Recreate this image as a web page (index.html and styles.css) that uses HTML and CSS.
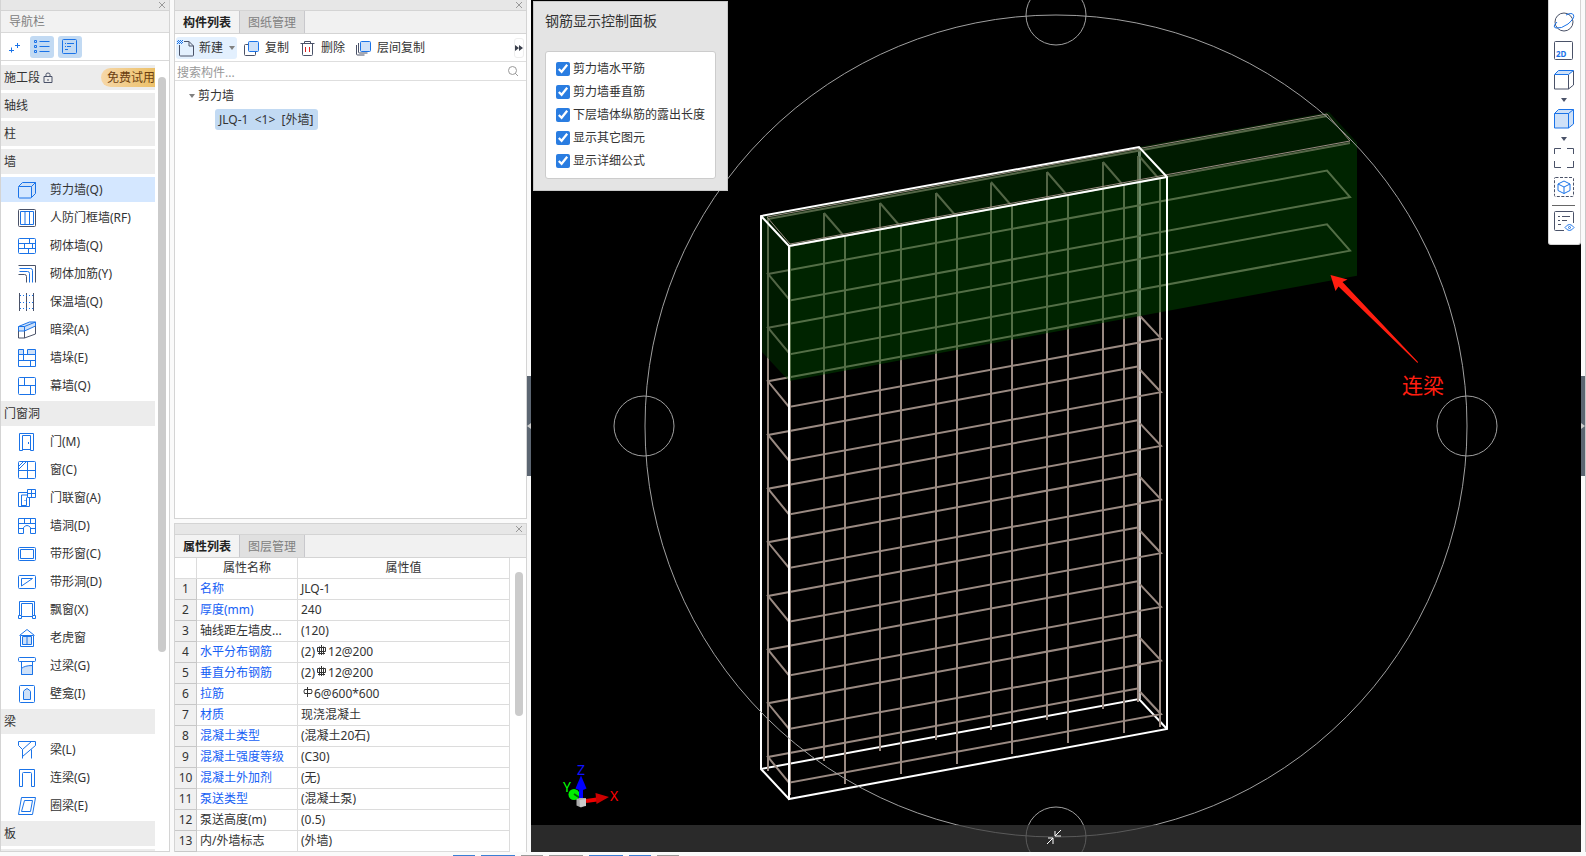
FILE: index.html
```html
<!DOCTYPE html>
<html lang="zh-CN">
<head>
    <meta charset="UTF-8">
    <meta name="viewport" content="width=device-width, initial-scale=1.0">
    <title>剪力墙</title>
    <link rel="stylesheet" href="styles.css">
</head>
<body>
    <main class="workspace">
        <!-- navigation -->
        <nav class="panel nav">
            <div class="grip"><button class="close" aria-label="关闭"><svg viewBox="0 0 8 8"><path d="M1 1l6 6M7 1l-6 6"/></svg></button></div>
            <h2 class="nav-title">导航栏</h2>
            <div class="nav-tools">
                <button class="tool" aria-label="展开"><svg class="icon" viewBox="0 0 18 18"><path class="b" d="M6.500 9.500v5M4 12.500h5M12.500 5v5M10 7.500h5"/></svg></button>
                <button class="tool on" aria-label="列表"><svg class="icon" viewBox="0 0 18 18"><path class="b" d="M6.500 3.500h10M6.500 8.500h10M6.500 13.500h10M1.500 2.500h2v2h-2zM1.500 7.500h2v2h-2zM1.500 12.500h2v2h-2z"/></svg></button>
                <button class="tool on" aria-label="详情"><svg class="icon" viewBox="0 0 18 18"><rect class="b" x="1.500" y="1.500" width="14" height="14" rx="1"/><path class="b" d="M4 5.500h1M6 5.500h7M4 8.500h1M6 8.500h4M4 11.500h3"/></svg></button>
            </div>
            <div class="nav-body">
                <ul class="nav-list">
                    <li><button class="group">施工段<svg class="lock" viewBox="0 0 10 12"><path d="M1 4.500h8v6H1zM3 4.500v-2q0-1.500 2-1.500t2 1.500v2M5 7v2"/></svg><span class="trial">免费试用</span></button></li>
                    <li><button class="group">轴线</button></li>
                    <li><button class="group">柱</button></li>
                    <li><button class="group">墙</button></li>
                    <li><button class="item active"><svg class="icon" viewBox="0 0 18 18"><path class="b f" d="M.5 5.500l4-4h13v11l-4 4V5.500z"/><rect class="b" x=".5" y="5.500" width="13" height="11.500" rx="1" fill="#d4e7ff"/><path class="b" d="M13.500 5.500l4-4"/></svg>剪力墙(Q)</button></li>
                    <li><button class="item"><svg class="icon" viewBox="0 0 18 18"><rect class="d" x=".5" y=".5" width="17" height="17" rx="1"/><path class="b" d="M2.500 2.500h13v13h-13zM7 2.500v13M11.500 2.500v13"/></svg>人防门框墙(RF)</button></li>
                    <li><button class="item"><svg class="icon" viewBox="0 0 18 18"><rect class="b" x=".5" y="1.500" width="17" height="15" rx="1"/><path class="b" d="M.5 6.500h17M.5 11.500h17M11.500 1.500v5M6.500 6.500v5M14.500 6.500v5M10.500 11.500v5"/></svg>砌体墙(Q)</button></li>
                    <li><button class="item"><svg class="icon" viewBox="0 0 18 18"><path class="d" d="M.5.500h17v17M.5 9.500h6q2 0 2 2v6"/><path class="b" d="M1.500 3.500h11q2 0 2 2v12M1.500 6.500h8q2 0 2 2v9"/></svg>砌体加筋(Y)</button></li>
                    <li><button class="item"><svg class="icon" viewBox="0 0 18 18"><path class="d" d="M1.500 0v18M8.500 0v18M15.500 0v18"/><path class="b" stroke-dasharray="1 2" d="M2 2.500h14M2 9.500h14M2 15.500h14"/></svg>保温墙(Q)</button></li>
                    <li><button class="item"><svg class="icon" viewBox="0 0 18 18"><path class="d" d="M.5 10v7h6v-7M6.500 17l11-4V5"/><path class="b f" d="M.5 5.500l11-4.500h6v4l-11 5h-6zM.5 5.500h6v4.500M6.500 5.500L17.500 1"/></svg>暗梁(A)</button></li>
                    <li><button class="item"><svg class="icon" viewBox="0 0 18 18"><path class="b f" d="M.5.500h5v5h-5zM9.500.500h8v5h-8z"/><path class="b" d="M.5 5.500v12h17v-12M.5 5.500h17M5.500.500v5M.5 11.500h17M5.500 5.500v6M12.500 11.500v6"/></svg>墙垛(E)</button></li>
                    <li><button class="item"><svg class="icon" viewBox="0 0 18 18"><rect class="b" x=".5" y=".5" width="17" height="17" rx="1"/><path class="b" d="M.5 8.500h17M6.500.500v8M12.500 8.500v9"/></svg>幕墙(Q)</button></li>
                    <li><button class="group">门窗洞</button></li>
                    <li><button class="item"><svg class="icon" viewBox="0 0 18 18"><path class="b" d="M1.500 17.500V.500h14v17h-3v-15h-8v15z"/><path class="b" d="M4.500 16.500h8M10.500 9v2"/></svg>门(M)</button></li>
                    <li><button class="item"><svg class="icon" viewBox="0 0 18 18"><rect class="b" x=".5" y=".5" width="17" height="17" rx="1"/><path class="b" d="M.5 9.500h17M9.500.500v17M1 5l4-4M1 8l7-7"/></svg>窗(C)</button></li>
                    <li><button class="item"><svg class="icon" viewBox="0 0 18 18"><path class="b" d="M9.500.500h8v8h-8zM9.500 4.500h8M13.500.500v8M9.500 3.500h-9v14h11v-9M3.500 17v-11h6M3.500 16.500h5v-8M7 11v1"/></svg>门联窗(A)</button></li>
                    <li><button class="item"><svg class="icon" viewBox="0 0 18 18"><path class="b" d="M.5 1.500h17v15h-5v-6q-3.500-4-7 0v6h-5zM.5 6.500h17M6.500 1.500v5M12.500 1.500v5M.5 11.500h5M12.500 11.500h5"/></svg>墙洞(D)</button></li>
                    <li><button class="item"><svg class="icon" viewBox="0 0 18 18"><rect class="b" x=".5" y="2.500" width="17" height="13" rx="1"/><path class="b" d="M2.500 4.500h13v9h-13z"/></svg>带形窗(C)</button></li>
                    <li><button class="item"><svg class="icon" viewBox="0 0 18 18"><rect class="b" x=".5" y="2.500" width="17" height="13" rx="1"/><path class="b" d="M3.500 13V5.500h11z"/></svg>带形洞(D)</button></li>
                    <li><button class="item"><svg class="icon" viewBox="0 0 18 18"><path class="b" d="M1.500 14.500V.500h15v14M3.500 14.500v-12h11v12M.5 14.500h3v3h-3zM14.500 14.500h3v3h-3zM3.500 15.500h11"/></svg>飘窗(X)</button></li>
                    <li><button class="item"><svg class="icon" viewBox="0 0 18 18"><path class="b" d="M1.500 6.500L9 .5l7.500 6M2.500 6.500v11h13v-11z"/><path class="b f" d="M4.500 7.500h9v8h-9zM9 7.500v8"/></svg>老虎窗</button></li>
                    <li><button class="item"><svg class="icon" viewBox="0 0 18 18"><rect class="b" x=".5" y=".5" width="17" height="4" rx="1"/><path class="b" d="M3.500 4.500v13h11v-13"/><path class="b f" d="M3.500 17.500v-6q3-3 11-3v9z"/></svg>过梁(G)</button></li>
                    <li><button class="item"><svg class="icon" viewBox="0 0 18 18"><rect class="b" x="1.500" y=".5" width="15" height="17" rx="1"/><path class="b f" d="M5.500 14.500v-8q0-1 3.500-3 3.500 2 3.500 3v8z"/></svg>壁龛(I)</button></li>
                    <li><button class="group">梁</button></li>
                    <li><button class="item"><svg class="icon" viewBox="0 0 18 18"><path class="b" d="M.5 4.500v-4h17v4L4.500 15.500M.5 4.500l4 4v9M4.500 8.500l9-8M13.500 8.500v9"/></svg>梁(L)</button></li>
                    <li><button class="item"><svg class="icon" viewBox="0 0 18 18"><path class="b" d="M1.500 17.500V.500h15v17h-3v-13q0-1-1-1h-7q-1 0-1 1v13z"/></svg>连梁(G)</button></li>
                    <li><button class="item"><svg class="icon" viewBox="0 0 18 18"><path class="b" d="M3.500.500h14l-3 17H.500zM6.500 3.500h8l-2 11h-9z"/></svg>圈梁(E)</button></li>
                    <li><button class="group">板</button></li>
                    <li><button class="group" aria-label="更多"></button></li>
                </ul>
                <div class="track nav-track"><i></i></div>
            </div>
        </nav>

        <div class="middle">
            <!-- component list -->
            <section class="panel components">
                <div class="grip"><button class="close" aria-label="关闭"><svg viewBox="0 0 8 8"><path d="M1 1l6 6M7 1l-6 6"/></svg></button></div>
                <div class="tabs"><button class="tab on">构件列表</button><button class="tab">图纸管理</button></div>
                <div class="actions">
                    <button class="action new"><svg class="icon" viewBox="0 0 18 18"><path class="d" d="M2.500 6v10q0 1 1 1h12q1 0 1-1V7l-4.500-4.500H7M12 2.500V7h4.500"/><path class="check" d="M1 1.500h5M0 2.500h5M1 3.500h5M0 4.500h5"/></svg>新建<span class="caret"></span></button>
                    <button class="action"><svg class="icon" viewBox="0 0 18 18"><path class="d" d="M5 5.500H2.500q-1 0-1 1v9q0 1 1 1h9q1 0 1-1V13"/><rect class="b f" x="5.500" y="2.500" width="10" height="10" rx="1"/></svg>复制</button>
                    <button class="action"><svg class="icon" viewBox="0 0 18 18"><path class="d" d="M3.500 5v10.500q0 1 1 1h8q1 0 1-1V5M1.500 4.500h14M5.500 4V2.500h6V4"/><path class="r" d="M6.500 8v5M10.500 8v5"/></svg>删除</button>
                    <button class="action"><svg class="icon" viewBox="0 0 18 18"><path class="d" d="M1.500 6v9q0 1 1 1h7M3.500 4v9q0 1 1 1h8"/><rect class="b f" x="5.500" y="2.500" width="10" height="10" rx="1"/></svg>层间复制</button>
                    <button class="more" aria-label="更多"><svg viewBox="0 0 8 6"><path d="M0 0l4 3-4 3zM4 0l4 3-4 3z"/></svg></button>
                </div>
                <label class="search"><input type="text" placeholder="搜索构件..." aria-label="搜索构件"><svg viewBox="0 0 12 12"><circle cx="5.500" cy="5.500" r="4"/><path d="M8 8l3 3"/></svg></label>
                <div class="tree">
                    <button class="branch"><span class="caret"></span>剪力墙</button>
                    <button class="leaf">JLQ-1&nbsp; &lt;1&gt;&nbsp; [外墙]</button>
                </div>
            </section>

            <!-- property list -->
            <section class="panel props">
                <div class="grip"><button class="close" aria-label="关闭"><svg viewBox="0 0 8 8"><path d="M1 1l6 6M7 1l-6 6"/></svg></button></div>
                <div class="tabs"><button class="tab on">属性列表</button><button class="tab">图层管理</button></div>
                <div class="props-body">
                    <table>
                        <thead><tr><th class="no"></th><th class="name">属性名称</th><th>属性值</th></tr></thead>
                        <tbody>
                            <tr><td>1</td><td class="link">名称</td><td>JLQ-1</td></tr>
                            <tr><td>2</td><td class="link">厚度(mm)</td><td>240</td></tr>
                            <tr><td>3</td><td>轴线距左墙皮...</td><td>(120)</td></tr>
                            <tr><td>4</td><td class="link">水平分布钢筋</td><td>(2)<svg class="bar" viewBox="0 0 11 11"><path d="M1.500 2.500h8v4h-8zM5.500 0v10M3.500 1.500v8M7.500 1.500v8M2 8.500h7"/></svg>12@200</td></tr>
                            <tr><td>5</td><td class="link">垂直分布钢筋</td><td>(2)<svg class="bar" viewBox="0 0 11 11"><path d="M1.500 2.500h8v4h-8zM5.500 0v10M3.500 1.500v8M7.500 1.500v8M2 8.500h7"/></svg>12@200</td></tr>
                            <tr><td>6</td><td class="link">拉筋</td><td><svg class="bar" viewBox="0 0 11 11"><path d="M2.500 2.500h7q1 2 0 4h-7q-1-2 0-4zM5.500 0v10"/></svg>6@600*600</td></tr>
                            <tr><td>7</td><td class="link">材质</td><td>现浇混凝土</td></tr>
                            <tr><td>8</td><td class="link">混凝土类型</td><td>(混凝土20石)</td></tr>
                            <tr><td>9</td><td class="link">混凝土强度等级</td><td>(C30)</td></tr>
                            <tr><td>10</td><td class="link">混凝土外加剂</td><td>(无)</td></tr>
                            <tr><td>11</td><td class="link">泵送类型</td><td>(混凝土泵)</td></tr>
                            <tr><td>12</td><td>泵送高度(m)</td><td>(0.5)</td></tr>
                            <tr><td>13</td><td>内/外墙标志</td><td>(外墙)</td></tr>
                        </tbody>
                    </table>
                    <div class="track props-track"><i></i></div>
                </div>
            </section>
        </div>

        <div class="splitter"><button class="handle" aria-label="折叠"><svg viewBox="0 0 4 6"><path d="M4 0L0 3l4 3z"/></svg></button></div>

        <!-- 3D view -->
        <section class="view">
            <svg class="scene" viewBox="531 0 1050 852" preserveAspectRatio="xMidYMin slice">
                <defs>
                    <path id="hoop" d="M1139 312.600L768 381.300L789 407L1161 338.500L1140 316"/>
                    <path id="long-hoop" d="M768 274L1327 170.600L1350 197L790 300.500z"/>
                    <path id="tie" d="M824 213l19 22"/>
                </defs>
                <!-- bottom and rear edges of the wall -->
                <path class="edge" d="M761 769L1139 699L1167 729"/>
                <path class="rear" d="M1139.500 148V699"/>
                <!-- vertical bars -->
                <g class="rebar upright">
                    <path d="M768 218V771M824 213V761M880 203V751M936 193V740M991 183V730M1047 172V720M1103 162V709M1138 156V702"/>
                    <path d="M790 246V795M845 236V784M901 226V774M957 216V764M1012 205V754M1068 195V743M1124 184V733M1160 178V727"/>
                </g>
                <g class="rebar">
                    <use href="#hoop"/>
                    <use href="#hoop" y="53.700"/>
                    <use href="#hoop" y="107.400"/>
                    <use href="#hoop" y="161"/>
                    <use href="#hoop" y="214.700"/>
                    <use href="#hoop" y="268.400"/>
                    <use href="#hoop" y="322"/>
                    <use href="#hoop" y="375.700"/>
                    <use href="#long-hoop"/>
                    <use href="#long-hoop" y="53.700"/>
                    <path d="M768 219L1327 116M1350 143L790 246"/>
                    <use href="#tie"/>
                    <use href="#tie" x="56" y="-10"/>
                    <use href="#tie" x="112" y="-20"/>
                    <use href="#tie" x="167" y="-31"/>
                    <use href="#tie" x="223" y="-41"/>
                    <use href="#tie" x="279" y="-51"/>
                    <use href="#tie" x="316" y="-56"/>
                </g>
                <!-- coupling beam -->
                <path class="beam-dark" d="M761 216L1329 112L1357 142.500L789 247V381L761 351z"/>
                <path class="beam" d="M789 247L1357 142.500V275.700L789 381z"/>
                <path class="rebar thin" d="M767 217L1327 114L1350 141L790 244z"/>
                <path class="edge" d="M789 799L761 769V216L1139 147L1167 177V729L789 799V246L761 216M789 246L1167 177"/>
                <!-- orbit rings -->
                <g class="orbit">
                    <circle cx="1056" cy="426" r="411"/>
                    <circle cx="1056" cy="15" r="30"/>
                    <circle cx="1056" cy="837" r="30"/>
                    <circle cx="644" cy="426" r="30"/>
                    <circle cx="1467" cy="426" r="30"/>
                </g>
                <path class="pointer" d="M1330.500 275l17 4.500-5 2.500 75.500 80-.5 1-79-76.500-3 4.500z"/>
                <text class="note" x="1402" y="393">连梁</text>
                <!-- axes -->
                <circle cx="574" cy="794.500" r="5.500" fill="#0e0"/>
                <path d="M574 794l6 4" stroke="#060" stroke-width="2"/>
                <path d="M586 801l11-1.500" stroke="#e00" stroke-width="4"/>
                <path d="M595.500 793l13.500 4-12.500 7z" fill="#c00"/>
                <path d="M581 800v-13" stroke="#00f" stroke-width="4"/>
                <path d="M581 775.500l5.500 13q-5.500 3-11 0z" fill="#00f"/>
                <path d="M576.500 799l3-1h6.500v7l-5 2.500-4.500-2z" fill="#aaa"/>
                <path d="M579.500 800l6.500-1v7l-6 1z" fill="#ccc"/>
                <text class="axis" x="577" y="775" fill="#11f">Z</text>
                <text class="axis" x="563" y="792" fill="#0f0">Y</text>
                <text class="axis" x="610" y="801" fill="#f00">X</text>
            </svg>

            <form class="display">
                <h3>钢筋显示控制面板</h3>
                <div class="options">
                    <label><input type="checkbox" checked>剪力墙水平筋</label>
                    <label><input type="checkbox" checked>剪力墙垂直筋</label>
                    <label><input type="checkbox" checked>下层墙体纵筋的露出长度</label>
                    <label><input type="checkbox" checked>显示其它图元</label>
                    <label><input type="checkbox" checked>显示详细公式</label>
                </div>
            </form>

            <div class="view-tools">
                <button aria-label="动态观察"><svg viewBox="0 0 22 22"><circle class="d" cx="11" cy="11" r="9"/><path class="b" d="M4 11Q-1 16 3 17 8 18 15 13 22 7 20.500 4 19 1 13 4"/></svg></button>
                <button aria-label="二维"><svg viewBox="0 0 22 22"><rect class="d" x="1.500" y="1.500" width="18" height="18" rx="1"/><text x="3" y="17">2D</text></svg></button>
                <button aria-label="视图方向"><svg viewBox="0 0 22 22"><path class="d" d="M1.500 6v14h14V6M15.500 20l5-4V2"/><path class="b f" d="M1.500 5.500l4-4h15l-5 4z"/></svg></button>
                <span class="caret"></span>
                <button aria-label="显示样式"><svg viewBox="0 0 22 22"><path class="b f" d="M1.500 5.500l4-4h15v14.500l-5 4h-14zM1.500 5.500h14v14.500M15.500 5.500l5-4"/></svg></button>
                <span class="caret"></span>
                <button aria-label="全屏"><svg viewBox="0 0 22 22"><path class="d" d="M1.500 7V1.500H8M14 1.500h6.500V7M20.500 14v6.500H14M8 20.500H1.500V14"/></svg></button>
                <button aria-label="局部三维"><svg viewBox="0 0 22 22"><rect class="d" x="1.500" y="1.500" width="19" height="19" rx="1" stroke-dasharray="3 1.500"/><path class="b" d="M11 5l6 3v6.500l-6 3-6-3V8zM5 8l6 3 6-3M11 11v6.500"/></svg></button>
                <hr>
                <button aria-label="显示设置"><svg viewBox="0 0 22 22"><path class="d" d="M11 20.500H2.500q-1 0-1-1v-17q0-1 1-1h17q1 0 1 1V13M5 6.500h2M9 6.500h8M5 10.500h2M9 10.500h5M5 14.500h3"/><path class="b" d="M12 17.500q4.500-6 9 0-4.500 6-9 0z"/><circle class="b" cx="16.500" cy="17.500" r="1"/></svg></button>
            </div>

            <div class="dock"><button aria-label="收起"><svg viewBox="0 0 16 16"><path d="M15 1L9 7M9 2v5h6M1 15l6-6M2 9h5v6"/></svg></button></div>
        </section>

        <div class="splitter right"><button class="handle" aria-label="展开"><svg viewBox="0 0 4 6"><path d="M0 0l4 3-4 3z"/></svg></button></div>
    </main>
    <footer class="status"><i></i><i class="wide"></i><i class="gray"></i><i class="gray wide"></i><i class="wide"></i><i></i><i class="gray"></i></footer>
</body>
</html>
```
FILE: styles.css
```css
* {
    box-sizing: border-box;
}
body {
    margin: 0;
    height: 100vh;
    display: flex;
    flex-direction: column;
    overflow: hidden;
    background: #fafafa;
    color: #333;
    font-family: "Noto Sans", "Noto Sans CJK SC", sans-serif;
    font-size: 12px;
    line-height: 20px;
}
button {
    padding: 0;
    border: 0;
    background: none;
    color: inherit;
    font: inherit;
}
svg {
    display: block;
    flex: none;
    fill: none;
}
.workspace {
    flex: 1;
    min-height: 0;
    display: flex;
}

/* icon strokes */
.icon {
    width: 18px;
    height: 18px;
}
.b {
    stroke: #1a73e8;
}
.d {
    stroke: #4a5268;
}
.r {
    stroke: #e02020;
}
.f {
    fill: #cfe1f8;
}
.check {
    stroke: #1a73e8;
    stroke-dasharray: 1 1;
}
.caret {
    border: 3px solid transparent;
    border-top: 4px solid #808080;
    border-bottom: 0;
}

/* panels */
.panel {
    display: flex;
    flex-direction: column;
    background: #fff;
    border: 1px solid #d4d4d4;
    border-top: 0;
    overflow: hidden;
}
.grip {
    flex: none;
    height: 11px;
    display: flex;
    justify-content: flex-end;
    align-items: center;
    padding-right: 3px;
    background: #e7e7e7;
    border-bottom: 1px solid #d4d4d4;
}
.close svg {
    width: 8px;
    height: 8px;
    stroke: #999;
}
.track {
    position: relative;
    flex: none;
}
.track i {
    display: block;
    width: 8px;
    border-radius: 4px;
    background: #cbcbcb;
}

/* navigation */
.nav {
    width: 170px;
    flex: none;
}
.nav-title {
    flex: none;
    margin: 0;
    height: 22px;
    padding-left: 8px;
    background: #f2f2f2;
    border-bottom: 1px solid #d9d9d9;
    color: #808080;
    font-size: 12px;
    font-weight: normal;
    line-height: 22px;
}
.nav-tools {
    flex: none;
    height: 28px;
    display: flex;
    align-items: center;
    gap: 4px;
    padding-left: 1px;
    border-bottom: 1px solid #d9d9d9;
}
.tool {
    width: 24px;
    height: 22px;
    display: flex;
    align-items: center;
    justify-content: center;
    border-radius: 3px;
}
.tool.on {
    background: #c2daf3;
}
.nav-body {
    flex: 1;
    min-height: 0;
    display: flex;
    gap: 3px;
    padding-top: 4px;
    overflow: hidden;
}
.nav-list {
    flex: 1;
    margin: 0;
    padding: 0;
    list-style: none;
    display: flex;
    flex-direction: column;
    gap: 3px;
}
.nav-list li {
    flex: none;
}
.group, .item {
    width: 100%;
    height: 25px;
    display: flex;
    align-items: center;
    text-align: left;
}
.group {
    padding-left: 3px;
    background: #ececec;
}
.item {
    gap: 14px;
    padding-left: 17px;
}
.item.active {
    background: #d4e7ff;
}
.lock {
    width: 10px;
    height: 12px;
    margin-left: 3px;
    stroke: #4a5268;
}
.trial {
    height: 19px;
    margin-left: auto;
    padding-left: 6px;
    border-radius: 10px 0 0 10px;
    background: linear-gradient(90deg, #f6d7a8, #ecc068);
    color: #6b3e10;
    line-height: 19px;
}
.nav-track {
    width: 11px;
    padding-top: 12px;
}
.nav-track i {
    height: 575px;
}

/* middle column */
.middle {
    width: 353px;
    flex: none;
    margin-left: 4px;
    display: flex;
    flex-direction: column;
    gap: 4px;
}
.components {
    flex: 1;
}
.tabs {
    flex: none;
    height: 23px;
    display: flex;
    background: #f1f1f1;
    border-bottom: 1px solid #d4d4d4;
}
.tab {
    width: 65px;
    padding-top: 2px;
    border-right: 1px solid #c8c8cc;
    background: #e0e0e0;
    color: #808080;
}
.tab.on {
    background: #f3f3f3;
    color: #222;
    font-weight: bold;
}
.actions {
    flex: none;
    height: 28px;
    display: flex;
    align-items: center;
    gap: 10px;
    padding: 0 2px 0 1px;
    border-bottom: 1px solid #dedede;
}
.action {
    height: 22px;
    display: flex;
    align-items: center;
    gap: 4px;
}
.action.new {
    margin-right: -4px;
    padding: 0 2px 0 1px;
    border-radius: 3px;
    background: #e3f0fe;
}
.action.new .caret {
    margin-left: 2px;
}
.more {
    width: 10px;
    height: 20px;
    margin-left: auto;
    display: flex;
    align-items: center;
    justify-content: center;
    border: 1px solid #eee;
    border-radius: 3px;
}
.more svg {
    width: 8px;
    height: 6px;
    fill: #3a3f4c;
}
.search {
    flex: none;
    height: 19px;
    display: flex;
    align-items: center;
    padding: 0 7px 0 2px;
    border-bottom: 1px solid #dedede;
}
.search input {
    flex: 1;
    height: 18px;
    padding: 2px 0 0;
    border: 0;
    outline: 0;
    font: inherit;
    line-height: 16px;
}
.search input::placeholder {
    color: #999;
}
.search svg {
    width: 12px;
    height: 12px;
    stroke: #999;
}
.tree {
    padding: 5px 0 0 14px;
    display: flex;
    flex-direction: column;
    align-items: flex-start;
    gap: 3px;
}
.branch {
    height: 20px;
    display: flex;
    align-items: center;
    gap: 3px;
}
.leaf {
    height: 21px;
    margin-left: 26px;
    padding: 0 5px 0 4px;
    border-radius: 3px;
    background: #c2daf3;
}

/* properties */
.props {
    flex: none;
    border-top: 1px solid #d4d4d4;
    border-bottom: 0;
}
.props-body {
    display: flex;
    gap: 5px;
}
table {
    flex: 1;
    table-layout: fixed;
    border-collapse: separate;
    border-spacing: 0;
}
th, td {
    height: 21px;
    padding: 0 3px;
    border-right: 1px solid #dcdcdc;
    border-bottom: 1px solid #dcdcdc;
    font-weight: normal;
    line-height: 20px;
    text-align: left;
    white-space: nowrap;
}
th {
    text-align: center;
}
.no {
    width: 22px;
}
.name {
    width: 101px;
}
td:first-child {
    padding: 0;
    background: #f0f0f0;
    border-color: #c8c8c8;
    text-align: center;
}
.link {
    color: #1560f5;
}
.bar {
    display: inline-block;
    width: 11px;
    height: 11px;
    margin: 0 1px;
    stroke: #333;
}
.props-track {
    width: 11px;
    padding-top: 14px;
}
.props-track i {
    height: 144px;
}

/* splitters */
.splitter {
    width: 4px;
    flex: none;
    display: flex;
    align-items: center;
    background: #fafafa;
}
.splitter.right {
    width: 5px;
    border-right: 1px solid #c8c8c8;
}
.handle {
    width: 4px;
    height: 100px;
    background: #5c6672;
}
.handle svg {
    width: 4px;
    height: 6px;
    fill: #ccc;
}

/* 3D view */
.view {
    position: relative;
    flex: 1;
    min-width: 0;
    background: #000;
    overflow: hidden;
}
.scene {
    width: 100%;
    height: 100%;
}
.rebar {
    stroke: #9a8a82;
    stroke-width: 2;
}
.rebar.thin {
    stroke-width: 1;
}
.edge {
    stroke: #fff;
    stroke-width: 2;
}
.rear {
    stroke: #c8c4c4;
    stroke-width: 3;
}
.beam-dark {
    fill: rgba(0, 58, 0, 0.46);
}
.beam {
    fill: rgba(0, 78, 0, 0.46);
}
.orbit {
    stroke: #a0a0a0;
}
.pointer {
    fill: #ff1e10;
}
.note {
    fill: #ff1e10;
    font-size: 21px;
}
.axis {
    font-size: 14px;
}
.display {
    position: absolute;
    top: 1px;
    left: 2px;
    width: 195px;
    padding: 9px 11px 11px;
    border: 1px solid #c8c8c8;
    background: #e4e4e4;
}
.display h3 {
    margin: 0 0 20px;
    font-size: 14px;
    font-weight: normal;
}
.options {
    display: flex;
    flex-direction: column;
    gap: 3px;
    padding: 7px 10px;
    border: 1px solid #ccc;
    border-radius: 3px;
    background: #fff;
}
.options label {
    display: flex;
    align-items: center;
    gap: 3px;
    white-space: nowrap;
}
.options input {
    width: 14px;
    height: 14px;
    flex: none;
    margin: 0;
    accent-color: #2a7de1;
}
.view-tools {
    position: absolute;
    top: 0;
    right: 0;
    width: 33px;
    padding: 11px 2px 12px 0;
    display: flex;
    flex-direction: column;
    align-items: center;
    gap: 7px;
    border: 1px solid #d4d4d4;
    border-top: 0;
    border-radius: 0 0 3px 3px;
    background: #fff;
}
.view-tools svg {
    width: 22px;
    height: 22px;
}
.view-tools text {
    fill: #1a73e8;
    font-size: 8px;
    font-weight: bold;
}
.view-tools .caret {
    border-top-color: #4a5268;
    margin-bottom: -1px;
}
.view-tools hr {
    width: 23px;
    margin: 0 0 -3px;
    border: 0;
    border-top: 1px solid #666;
}
.dock {
    position: absolute;
    left: 0;
    right: 0;
    bottom: 0;
    height: 27px;
    display: flex;
    align-items: center;
    justify-content: center;
    padding: 0 4px 3px 0;
    background: rgba(60, 60, 60, 0.7);
}
.dock svg {
    width: 16px;
    height: 16px;
    stroke: #fff;
}

.status {
    flex: none;
    height: 4px;
    display: flex;
    align-items: flex-end;
    gap: 6px;
    padding-left: 453px;
}
.status i {
    width: 22px;
    height: 1px;
    background: #3a7fd5;
}
.status .wide {
    width: 34px;
}
.status .gray {
    background: #999;
}
```
